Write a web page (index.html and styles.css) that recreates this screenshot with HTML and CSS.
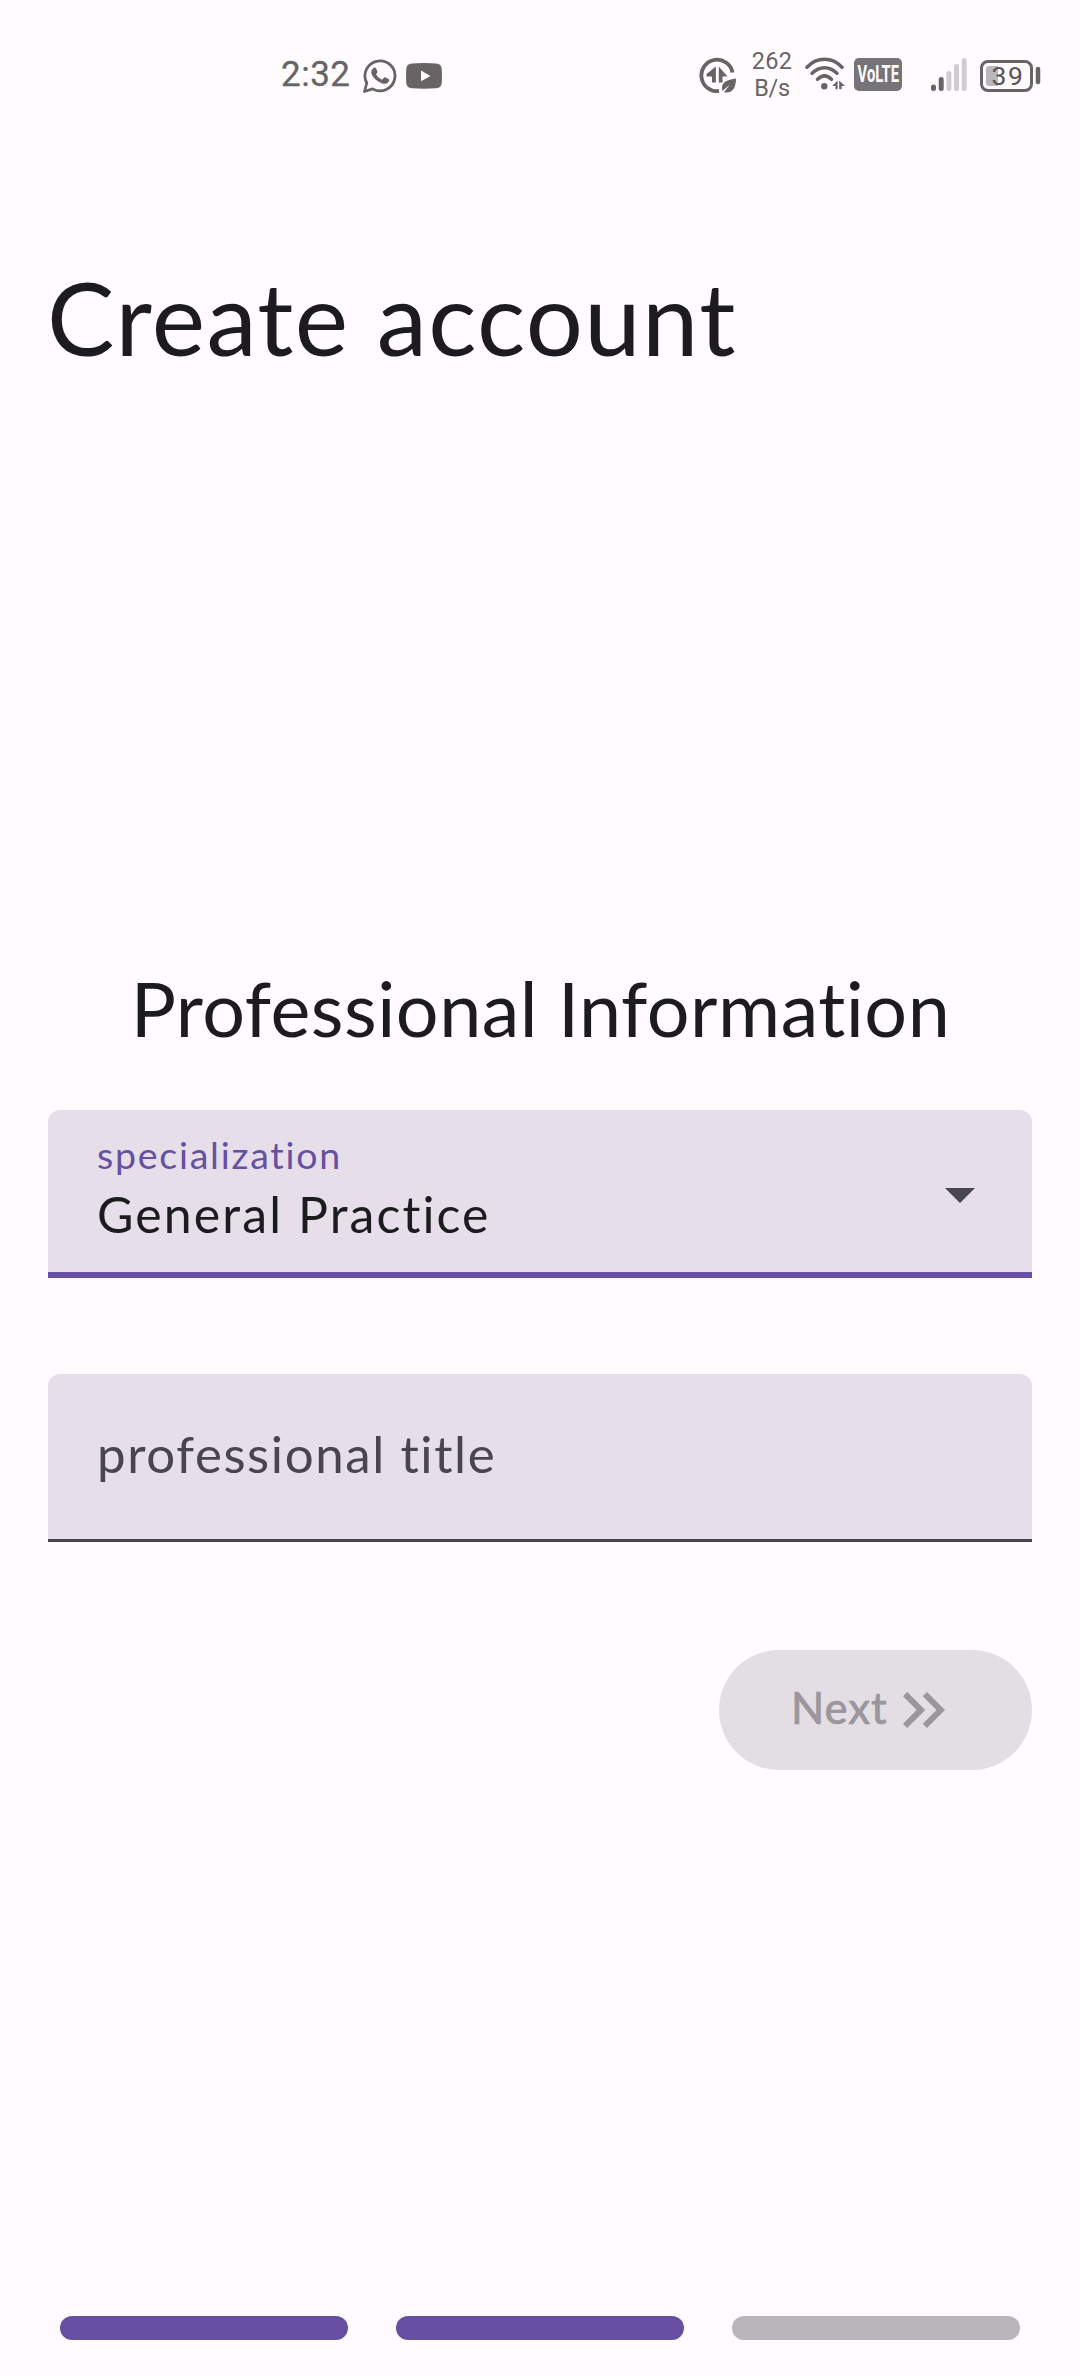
FILE: index.html
```html
<!DOCTYPE html>
<html lang="en">
<head>
<meta charset="utf-8">
<title>Create account</title>
<link rel="stylesheet" href="styles.css">
</head>
<body>
<div class="screen">
  <header class="status">
    <div class="status-left">
      <span class="clock">2:32</span>
      <svg class="whatsapp" width="36" height="36" viewBox="0 0 36 36">
        <path d="M2.5 33.5l2.3-8.5A15 15 0 1 1 10.600 30.900z" fill="none" stroke="#676466" stroke-width="2.8" stroke-linejoin="round"/>
        <path d="M10.700 10.800c1.600-1.900 3-1.400 3.700.2l.9 2.300c.4 1.100-.2 1.800-1.200 3 1.400 2.500 3.400 4.300 6 5.500l1.700-2c.5-.6 1.100-.6 1.800-.3l2.900 1.500c.9.500.8 1.400.3 2.500-1 2-3.900 2.900-6.500 2-5.200-1.700-8.500-4.800-10.500-8.900-1-2.200-.6-4.200.9-5.800z" fill="#676466"/>
      </svg>
      <svg class="youtube" width="36" height="26" viewBox="0 0 36 26">
        <path d="M6 .6Q18-.4 30 .6Q35.500 1 35.700 6Q36.200 13 35.700 20Q35.500 25 30 25.300Q18 26 6 25.300Q.5 25 .3 20Q-.2 13 .3 6Q.5 1 6 .6z" fill="#676466"/>
        <path d="M15 7.500v10.800l9.500-5.400z" fill="#fffbff"/>
      </svg>
    </div>
    <div class="status-right">
      <svg class="saver" width="38" height="38" viewBox="0 0 38 38">
        <path d="M33.500 15.500A15.700 15.700 0 1 0 20 34" fill="none" stroke="#676466" stroke-width="3.800"/>
        <path d="M16.900 9.500V25.500H13V19.500H7.500V17z M19.800 9.500L28.500 19.500H23.500V25.500H19.800z" fill="#676466"/>
        <path d="M37 21.500c-9 1-14 4-14 9.500 0 1.200.2 2 .6 2.800L31 27.500l-6 7.700c8 2 12-4 12-13.700z" fill="#676466"/>
      </svg>
      <div class="rate"><span class="rate-value">262</span><span class="rate-unit">B/s</span></div>
      <svg class="wifi" width="41" height="36" viewBox="0 0 41 36">
        <g fill="none" stroke="#676466" stroke-width="3.500" stroke-linecap="round">
          <path d="M2 10.200C12-.3 27-.3 37 10.200"/>
          <path d="M7 16.300C14.500 8.800 24.500 8.800 32 16.300"/>
          <path d="M12.500 22.300C17 18 22 18 26.500 22.300"/>
        </g>
        <circle cx="19.300" cy="29.300" r="3.200" fill="#676466"/>
        <path d="M32.600 23.500V32.300H30.500V29H27.200z M34.200 23.500L40 29H36.600V32.300H34.200z" fill="#676466"/>
      </svg>
      <div class="volte"><span class="volte-text">VoLTE</span></div>
      <svg class="signal" width="36" height="33" viewBox="0 0 36 33" stroke-width="5" stroke-linecap="round">
        <path d="M2.500 29v1.500M10.200 21.500v9" stroke="#676466"/>
        <path d="M17.900 15.500v15M25.500 8.500v22M33.200 2.500v28" stroke="#d0cdd0"/>
      </svg>
      <svg class="battery" width="61" height="32" viewBox="0 0 61 32">
        <rect x="1.500" y="1.500" width="50" height="29" rx="6.500" fill="none" stroke="#676466" stroke-width="3"/>
        <path d="M9 6h9v20H9a3 3 0 0 1-3-3V9a3 3 0 0 1 3-3z" fill="#bbb8bb"/>
        <path d="M58 9v13" stroke="#676466" stroke-width="4.500" stroke-linecap="round"/>
        <text x="11.500" y="25" class="battery-text">39</text>
      </svg>
    </div>
  </header>

  <h1 class="title">Create account</h1>

  <main class="form">
    <h2 class="heading">Professional Information</h2>
    <div class="field field-active">
      <div class="field-text">
        <span class="label">specialization</span>
        <span class="value">General Practice</span>
      </div>
      <svg class="caret" width="72" height="72" viewBox="0 0 24 24"><path d="M7 10l5 5 5-5z" fill="#49454f"/></svg>
    </div>
    <div class="field field-empty">
      <span class="placeholder">professional title</span>
    </div>
    <button class="next" disabled>
      <span>Next</span>
      <svg width="42" height="36" viewBox="5 6 14 12"><path d="M6.410 6L5 7.410 9.580 12 5 16.590 6.410 18l6-6zM13 6l-1.410 1.410L16.170 12l-4.580 4.590L13 18l6-6z" fill="#9b969b"/></svg>
    </button>
  </main>

  <div class="steps">
    <span class="step step-done"></span>
    <span class="step step-done"></span>
    <span class="step"></span>
  </div>
</div>
</body>
</html>
```
FILE: styles.css
```css
* { box-sizing: border-box; }

body {
  margin: 0;
  background: #fffbff;
  color: #1c1b1e;
  font-family: Lato, "Open Sans", sans-serif;
}

.screen {
  display: flex;
  flex-direction: column;
  width: 1080px;
  height: 2376px;
}

.status {
  display: flex;
  justify-content: space-between;
  height: 150px;
  padding: 50px 39px 0 281px;
  color: #676466;
  font-family: Roboto, sans-serif;
}

.status-left,
.status-right {
  display: flex;
  align-items: center;
  height: 50px;
}

.clock {
  width: 81px;
  font-size: 35px;
  line-height: 50px;
  letter-spacing: 0.5px;
  -webkit-text-stroke: 0.3px #676466;
}

.whatsapp { margin-top: 1px; }
.youtube { margin-left: 8px; margin-top: 1px; }
.saver { margin-top: 2px; }

.rate {
  display: flex;
  flex-direction: column;
  align-items: center;
  width: 42px;
  margin: -1px 0 0 14px;
  font-size: 23.5px;
  line-height: 26.5px;
}

.rate-value { letter-spacing: 0.3px; }
.rate-unit { letter-spacing: -0.3px; }

.wifi { margin-left: 12px; }

.volte {
  display: flex;
  align-items: center;
  justify-content: center;
  width: 48px;
  height: 33px;
  margin: -1px 0 0 8px;
  border-radius: 5px;
  background: #767476;
}

.volte-text {
  color: #fffbff;
  font-size: 23px;
  font-weight: 700;
  line-height: 33px;
  transform: scaleX(0.64);
}

.signal { margin-left: 29px; margin-top: -1px; }
.battery { margin-left: 13px; margin-top: 1px; }

.battery-text {
  fill: #57545a;
  font-family: Roboto, sans-serif;
  font-size: 26.5px;
  letter-spacing: 1.6px;
}

.title {
  margin: 107px 47px 0;
  font-size: 101px;
  font-weight: 400;
  line-height: 120px;
  letter-spacing: 1.4px;
}

.form {
  display: flex;
  flex-direction: column;
  margin-top: 583px;
  padding: 0 48px;
}

.heading {
  margin: 0 0 54px;
  padding-left: 1px;
  font-size: 75.500px;
  font-weight: 400;
  line-height: 96px;
  letter-spacing: 0.5px;
  text-align: center;
  white-space: nowrap;
}

.field {
  display: flex;
  justify-content: space-between;
  height: 168px;
  padding: 0 36px 0 48px;
  border-radius: 12px 12px 0 0;
  background: #e6dfea;
}

.field-active {
  padding-top: 21px;
  border-bottom: 6px solid #6750a1;
}

.field-text {
  display: flex;
  flex-direction: column;
  gap: 8px;
  padding-left: 1px;
}

.label {
  color: #6750a1;
  font-size: 37.500px;
  line-height: 48px;
  letter-spacing: 1.75px;
}

.value {
  font-size: 50px;
  line-height: 54px;
  letter-spacing: 2.1px;
}

.caret { margin-top: 27px; }

.field-empty {
  margin-top: 96px;
  padding-top: 44px;
  border-bottom: 3px solid #49454f;
}

.placeholder {
  padding-left: 1px;
  color: #49454f;
  font-size: 51px;
  line-height: 72px;
  letter-spacing: 1.6px;
}

.next {
  display: flex;
  align-self: flex-end;
  align-items: center;
  width: 313px;
  height: 120px;
  margin-top: 108px;
  padding: 0 0 0 72px;
  border: 0;
  border-radius: 60px;
  background: #e3dee3;
  color: #9b969b;
  font-family: inherit;
  font-size: 43.500px;
  font-weight: 500;
  line-height: 60px;
  letter-spacing: 0.9px;
  -webkit-text-stroke: 0.5px #9b969b;
}

.next span {
  width: 112px;
  margin-top: -6px;
  text-align: left;
}

.steps {
  display: flex;
  gap: 48px;
  margin-top: auto;
  padding: 0 60px 36px;
}

.step {
  flex: 1;
  height: 24px;
  border-radius: 12px;
  background: #b9b6b9;
}

.step-done { background: #6750a1; }
```
